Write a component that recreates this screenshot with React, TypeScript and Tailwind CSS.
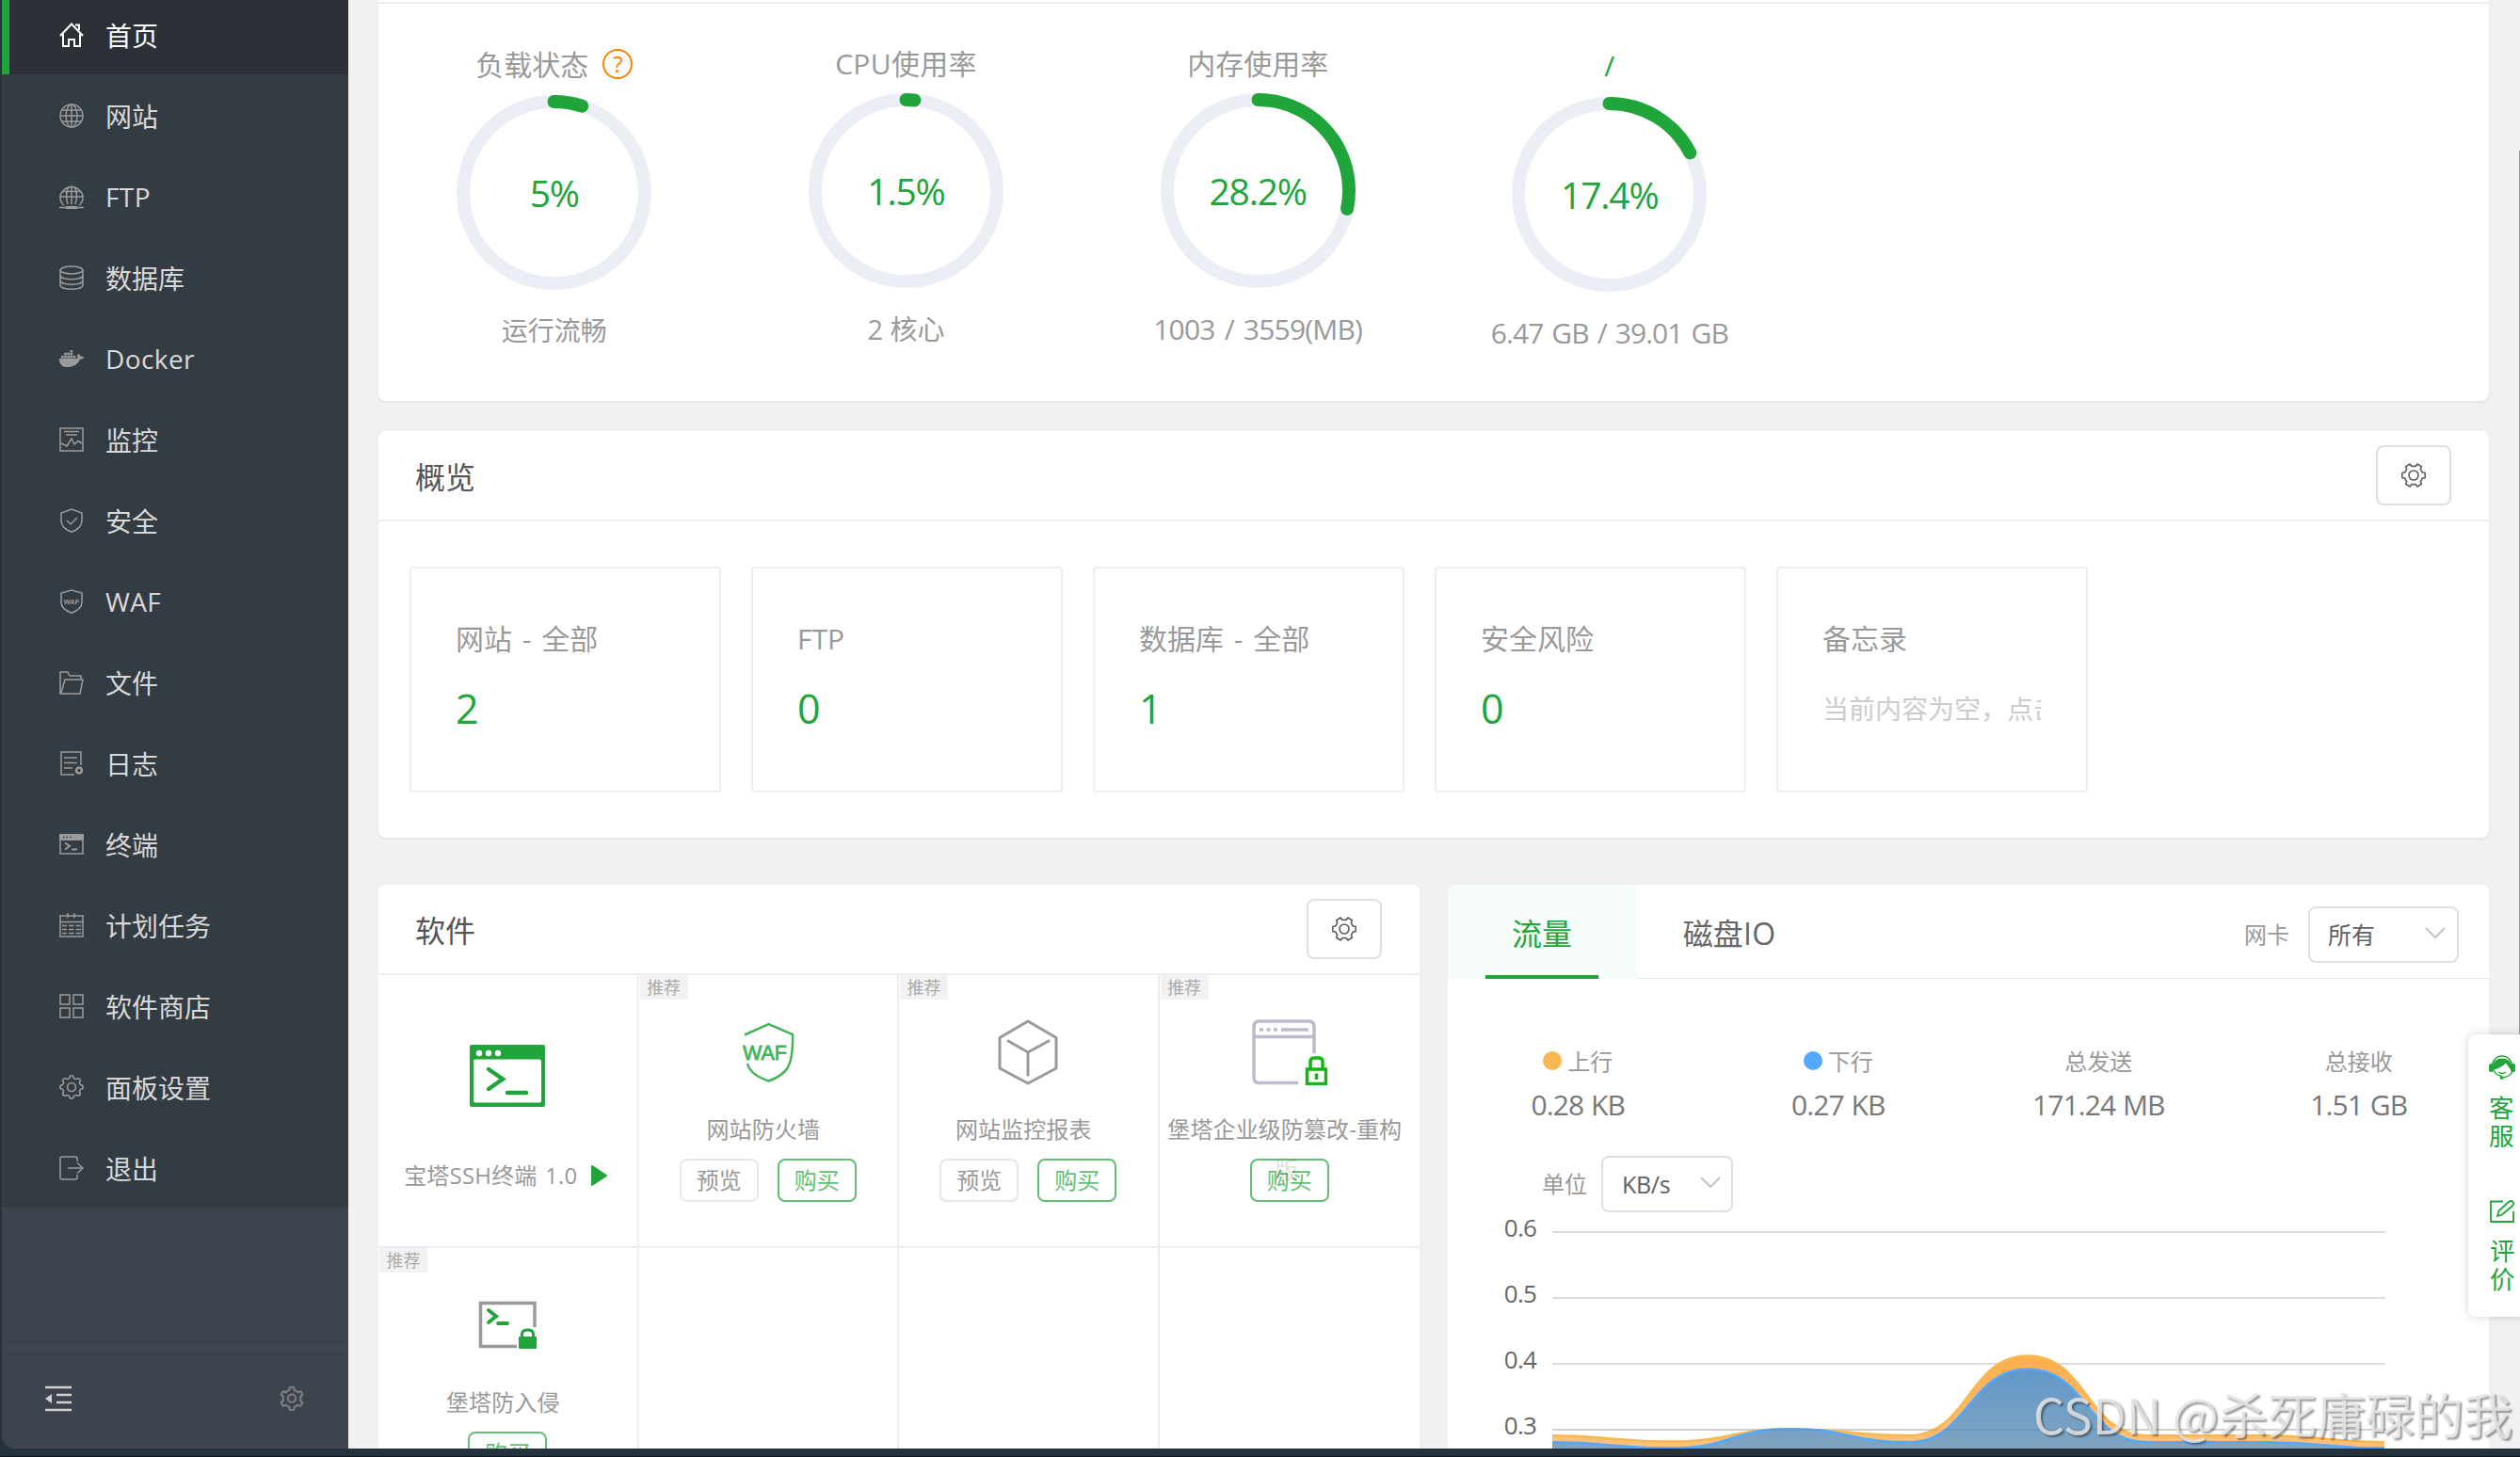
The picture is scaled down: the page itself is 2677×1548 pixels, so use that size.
import type { ReactNode } from "react";
import { AiOutlineSetting } from "react-icons/ai";
import { BsGear } from "react-icons/bs";
import { FaDocker } from "react-icons/fa";

const stroke = { fill: "none", stroke: "currentColor", strokeWidth: 1.5 };

// gear outline with flat teeth, centred on 13,13
const gearPath = (teeth: number, outer: number, inner: number) => {
  const step = (Math.PI * 2) / teeth;
  const points: string[] = [];
  for (let i = 0; i < teeth; i++) {
    const a = i * step;
    [[-0.2, outer], [0.2, outer], [0.3, inner], [0.7, inner]].forEach(([f, r]) => {
      points.push(`${(13 + Math.cos(a + f * step) * r).toFixed(2)} ${(13 + Math.sin(a + f * step) * r).toFixed(2)}`);
    });
  }
  return `M${points.join("L")}Z`;
};

const Icon = ({ children }: { children: ReactNode }) => (
  <svg viewBox="0 0 26 26" className="w-[26px] h-[26px] shrink-0" {...stroke}>
    {children}
  </svg>
);

const menus: { name: string; icon: ReactNode }[] = [
  {
    name: "首页",
    icon: (
      <Icon>
        <path strokeWidth="2" d="M1 14L13 1.5L25 14M4 12V25H10V18H16V25H22V12M17 2.5H21V8" />
      </Icon>
    ),
  },
  {
    name: "网站",
    icon: (
      <Icon>
        <circle cx="13" cy="13" r="12" />
        <ellipse cx="13" cy="13" rx="6" ry="12" />
        <path d="M13 1V25M1 13H25M3 7H23M3 19H23" />
      </Icon>
    ),
  },
  {
    name: "FTP",
    icon: (
      <Icon>
        <path d="M5 22A12 11 0 1 1 21 22M9 21C7 15 7 7 10 2M17 21C19 15 19 7 16 2M13 1V21M1 13H25M3 7.5H23M0 24.5H26" />
        <path strokeWidth="3" d="M7 24.5H19" />
      </Icon>
    ),
  },
  {
    name: "数据库",
    icon: (
      <Icon>
        <ellipse cx="13" cy="5" rx="12" ry="4" />
        <path d="M1 5V21C1 26.500 25 26.500 25 21V5M1 10.500C1 16 25 16 25 10.500M1 16C1 21.500 25 21.500 25 16" />
      </Icon>
    ),
  },
  { name: "Docker", icon: <FaDocker className="w-[26px] h-[26px]" /> },
  {
    name: "监控",
    icon: (
      <Icon>
        <rect x="1" y="1" width="24" height="24" />
        <path d="M5 4.500H21M7 8H19M2 17L8 20L13 12L16 18L20 14.500L24 17" />
      </Icon>
    ),
  },
  {
    name: "安全",
    icon: (
      <Icon>
        <path d="M13 1L24 5V13C24 19 19 23 13 25.200C7 23 2 19 2 13V5ZM8 13L12 17L19 10" />
      </Icon>
    ),
  },
  {
    name: "WAF",
    icon: (
      <Icon>
        <path d="M13 1L24 4V14C24 20 19 23 13 25.200C7 23 2 20 2 14V4Z" />
        <text x="13" y="15.800" textAnchor="middle" fontSize="7.500" fontWeight="700" fontFamily="Liberation Sans, sans-serif" fill="currentColor" stroke="none">
          WAF
        </text>
      </Icon>
    ),
  },
  {
    name: "文件",
    icon: (
      <Icon>
        <path d="M23 9V6H11L9 2H1V25H22L25 10H6L2 24" />
      </Icon>
    ),
  },
  {
    name: "日志",
    icon: (
      <Icon>
        <path d="M16 25H2V1H23V15M5 7H19M5 12.500H19M5 18H14" />
        <circle cx="21" cy="20.500" r="3" strokeWidth="2.500" />
      </Icon>
    ),
  },
  {
    name: "终端",
    icon: (
      <Icon>
        <rect x="1" y="3" width="24" height="20" />
        <path fill="currentColor" stroke="none" d="M0 2H26V9H0Z" />
        <path d="M6 11.500L11 14.800L6 18.500M13 18.500H19" strokeWidth="2" />
        <path d="M4 5.500H5.500M7.500 5.500H9M11 5.500H12.500" stroke="#343c43" />
      </Icon>
    ),
  },
  {
    name: "计划任务",
    icon: (
      <Icon>
        <path d="M1 3H25V25H1ZM1 9.500H25M9 0V5.500M16 0V5.500" />
        <path d="M3 13.500H8M10 13.500H15.500M17.500 13.500H23M3 17.500H8M10 17.500H15.500M17.500 17.500H23M3 21.500H8M10 21.500H15.500M17.500 21.500H23" />
      </Icon>
    ),
  },
  {
    name: "软件商店",
    icon: (
      <Icon>
        <rect x="1" y="1" width="10" height="10" />
        <rect x="15" y="1" width="10" height="10" />
        <rect x="1" y="15" width="10" height="10" />
        <rect x="15" y="15" width="10" height="10" />
      </Icon>
    ),
  },
  { name: "面板设置", icon: <BsGear className="w-[26px] h-[26px]" /> },
  {
    name: "退出",
    icon: (
      <Icon>
        <path d="M19 6V3Q19 1 17 1H3Q1 1 1 3V23Q1 25 3 25H17Q19 25 19 23V20M9 13H25M19 7.500L25 13L19 18.500" />
      </Icon>
    ),
  },
];

const Sidebar = () => (
  <aside className="flex flex-col w-[368px] h-[1539px] shrink-0 overflow-hidden rounded-bl-[14px] bg-[#3d444d]">
    <nav className="flex flex-col -mt-[7px] h-[1290px] bg-[#343c43]">
      {menus.map((item, i) => (
        <div
          key={item.name}
          className={`flex items-center h-[86px] pl-[53px] pt-px gap-[23px] border-l-8 ${
            i === 0 ? "bg-[#2c3138] border-[#20a53a] text-white" : "border-transparent text-[#9b9b9b]"
          }`}
        >
          {item.icon}
          <span
            className={`text-[28px] leading-[40px] ${/^[A-Z]/.test(item.name) ? "tracking-[0.4px]" : "pt-[3px]"} ${
              i === 0 ? "text-white" : "text-[#d8d8d8]"
            }`}
          >
            {item.name}
          </span>
        </div>
      ))}
    </nav>
    <div className="h-[150px] border-b-2 border-[#424b55]" />
    <div className="flex flex-1 items-center justify-between pl-[46px] pr-[45px]">
      <svg viewBox="0 0 28 28" className="w-[28px] h-[28px] text-[#d0d0d0]" fill="none" stroke="currentColor" strokeWidth="2.500">
        <path d="M0 2H28M12 10H28M12 18H28M0 26H28" />
        <path d="M7 9V19L0 14Z" fill="currentColor" stroke="none" />
      </svg>
      <AiOutlineSetting className="w-[30px] h-[30px] text-[#7b7f84]" />
    </div>
  </aside>
);

const gauges = [
  { title: "负载状态", value: 5, text: "运行流畅", help: true, titleClass: "h-[64px] text-[#999]", textClass: "text-[28px]" },
  { title: "CPU使用率", value: 1.5, text: "2 核心", titleClass: "h-[62px] text-[#999] tracking-[0.3px]", textClass: "text-[29px]" },
  { title: "内存使用率", value: 28.2, text: "1003 / 3559(MB)", titleClass: "h-[62px] text-[#999]", textClass: "text-[30px] tracking-[-0.8px] [word-spacing:3px]" },
  { title: "/", value: 17.4, text: "6.47 GB / 39.01 GB", titleClass: "h-[66px] text-[#20a53a]", textClass: "text-[30px] tracking-[-0.9px] [word-spacing:2px]" },
];

const Gauge = ({ value }: { value: number }) => {
  const length = 2 * Math.PI * 96.5;
  return (
    <div className="relative w-[207px] h-[207px]">
      <svg viewBox="0 0 207 207" className="w-[207px] h-[207px] -rotate-90" fill="none" strokeWidth="14">
        <circle cx="103.5" cy="103.5" r="96.5" stroke="#ebeef5" />
        <circle cx="103.5" cy="103.5" r="96.5" stroke="#20a53a" strokeLinecap="round" strokeDasharray={`${(length * value) / 100} ${length}`} />
      </svg>
      <div className="absolute inset-0 flex items-center justify-center text-[39px] tracking-[-1.2px] leading-none text-[#20a53a]">{value}%</div>
    </div>
  );
};

const GearButton = () => (
  <button className="flex items-center justify-center w-[80px] h-[64px] border-2 border-[#dcdfe6] rounded-lg bg-white text-[#606266]">
    <Icon>
      <path d={gearPath(6, 12.5, 9.8)} strokeWidth="1.7" strokeLinejoin="round" />
      <circle cx="13" cy="13" r="5" strokeWidth="1.7" />
    </Icon>
  </button>
);

const CardHeader = ({ title }: { title: string }) => (
  <div className="flex items-center justify-between h-[96px] pl-[39px] pr-10 border-b-2 border-[#eee]">
    <h2 className="text-[32px] text-[#555] leading-[44px] pt-[3px]">{title}</h2>
    <GearButton />
  </div>
);

const overview = [
  { name: "网站 - 全部", value: "2" },
  { name: "FTP", value: "0" },
  { name: "数据库 - 全部", value: "1" },
  { name: "安全风险", value: "0" },
  { name: "备忘录", memo: "当前内容为空，点击编辑" },
];

const SshIcon = () => (
  <svg viewBox="0 0 80 66" className="w-[80px] h-[66px]">
    <rect width="80" height="66" rx="2" fill="#20a53a" />
    <rect x="4" y="15.500" width="72" height="46" rx="2" fill="#fff" />
    <g fill="#fff">
      <circle cx="10" cy="9" r="3.200" />
      <circle cx="20" cy="9" r="3.200" />
      <circle cx="30" cy="9" r="3.200" />
    </g>
    <path d="M20 26L35 36.500L20 47M40 51H60" fill="none" stroke="#20a53a" strokeWidth="4.500" strokeLinecap="round" />
  </svg>
);

const WafIcon = () => (
  <svg viewBox="0 0 56 66" className="w-[56px] h-[66px]">
    <path d="M3 14.500L28.500 3L54 14C54.500 34 52 47 46 53Q39 60 28.500 63.500Q9 57 6 45" fill="none" stroke="#44b35a" strokeWidth="2.500" />
    <text x="24.500" y="40.500" textAnchor="middle" fontSize="21.500" fontFamily="Liberation Sans, sans-serif" fill="#44b35a" stroke="#44b35a" strokeWidth="0.800">
      WAF
    </text>
  </svg>
);

const BoxIcon = () => (
  <svg viewBox="0 0 64 70" className="w-[64px] h-[70px]" fill="none" stroke="#999" strokeWidth="3" strokeLinecap="round" strokeLinejoin="round">
    <path d="M32 2L62 19.500V52L32 68L2 52V19.500Z" />
    <path d="M11 23L32 35L54 23M32 35V59" />
  </svg>
);

const TamperIcon = () => (
  <svg viewBox="0 0 80 70" className="w-[80px] h-[70px]" fill="none" stroke="#bcbacd" strokeWidth="3.500">
    <path d="M49 67.500H7Q2 67.500 2 62V8Q2 2 8 2H60Q66 2 66 8V36M2 18.500H66" />
    <path d="M8 11H12M15.500 11H19.500M23 11H27" />
    <path d="M31 11H60" />
    <g stroke="#12b812">
      <rect x="58.500" y="53" width="20" height="15.500" />
      <path d="M62 52V45Q62 41 66 41H71Q75 41 75 45V52M68.500 57.500V64" />
    </g>
  </svg>
);

const IntrusionIcon = () => (
  <svg viewBox="0 0 62 52" className="w-[62px] h-[52px]" fill="none">
    <path d="M41 48.500H2.500V2.500H60V28" stroke="#999" strokeWidth="3.500" />
    <path d="M11 10L19 16.500L11 23M21 24H31" stroke="#20a53a" strokeWidth="3.800" strokeLinecap="round" />
    <rect x="43" y="38" width="19" height="13" rx="1" fill="#20a53a" />
    <path d="M46.500 39V35Q47 31 52.500 31Q58 31 58.500 35V39" stroke="#20a53a" strokeWidth="3" />
  </svg>
);

const software = [
  { name: "宝塔SSH终端 1.0", icon: <SshIcon />, running: true },
  { name: "网站防火墙", icon: <WafIcon />, preview: true },
  { name: "网站监控报表", icon: <BoxIcon />, preview: true },
  { name: "堡塔企业级防篡改-重构", icon: <TamperIcon />, rest: "版" },
  { name: "堡塔防入侵", icon: <IntrusionIcon /> },
  null,
  null,
  null,
];

const SoftwareCard = () => (
  <section className="w-[1106px] h-[700px] shrink-0 rounded-lg bg-white">
    <CardHeader title="软件" />
    <div className="grid grid-cols-4">
      {software.map((item, i) => (
        <div key={i} className={`relative h-[290px] border-b-2 border-[#ececf8] ${i % 4 < 3 ? "border-r-2" : ""}`}>
          {item?.running && (
            <div className="flex flex-col items-center pt-[74px]">
              {item.icon}
              <div className="flex items-center gap-[15px] mt-[55px] -ml-[4px]">
                <span className="text-[24px] leading-[36px] tracking-[0.2px] [word-spacing:2px] text-[#999]">{item.name}</span>
                <svg viewBox="0 0 17 22" className="w-[17px] h-[22px]">
                  <path d="M1 1V21L16 11Z" fill="#20a53a" stroke="#20a53a" strokeWidth="2" strokeLinejoin="round" />
                </svg>
              </div>
            </div>
          )}
          {item && !item.running && (
            <>
              <span className="absolute left-px top-0 w-[51px] h-[26px] bg-[#f2f2f2] text-[#aaa] text-[18px] leading-[26px] text-center">推荐</span>
              <div className="flex flex-col items-center">
                <div className="flex items-center justify-center h-[146px] pt-[18px]">{item.icon}</div>
                <div className="relative h-[49px] text-[24px] leading-[35px] tracking-[0.1px] text-[#999] whitespace-nowrap -ml-[10px]">
                  {item.name}
                  {item.rest && <span className="absolute left-[114px] top-[43px]">{item.rest}</span>}
                </div>
                <div className="relative flex gap-[20px]">
                  {item.preview && (
                    <button className="w-[84px] h-[46px] rounded-lg border-2 border-[#dcdfe6] bg-white text-[24px] leading-[42px] text-[#777] opacity-75">预览</button>
                  )}
                  <button className="w-[84px] h-[46px] rounded-lg border-2 border-[#20a53a] bg-white text-[24px] leading-[42px] text-[#20a53a] opacity-70">购买</button>
                </div>
              </div>
            </>
          )}
        </div>
      ))}
    </div>
  </section>
);

const Chevron = () => (
  <svg viewBox="0 0 22 12" className="w-[22px] h-[12px] -mt-[5px]" fill="none" stroke="#c0c4cc" strokeWidth="2">
    <path d="M1 1L11 11L21 1" />
  </svg>
);

const stats = [
  { name: "上行", value: "0.28 KB", dot: "bg-[#f7b851]" },
  { name: "下行", value: "0.27 KB", dot: "bg-[#52a9ff]" },
  { name: "总发送", value: "171.24 MB" },
  { name: "总接收", value: "1.51 GB" },
];

const up = [0.291, 0.282, 0.301, 0.291, 0.412, 0.291, 0.291, 0.281];
const down = [0.281, 0.272, 0.301, 0.281, 0.392, 0.281, 0.281, 0.272];

const toY = (v: number) => 1 + (0.6 - v) * 700;

const curve = (data: number[]) => {
  const step = 884 / (data.length - 1);
  return data.reduce((d, v, i) => {
    if (i === 0) return `M0 ${toY(v)}`;
    const mid = (i - 0.5) * step;
    return `${d}C${mid} ${toY(data[i - 1])} ${mid} ${toY(v)} ${i * step} ${toY(v)}`;
  }, "");
};

const Chart = () => (
  <div className="flex">
    <div className="w-[111px] pr-[17px] -mt-[5px] text-right text-[26px] tracking-[-0.8px] leading-[70px] text-[#666]">
      {["0.6", "0.5", "0.4", "0.3"].map((label) => (
        <div key={label} className="h-[70px] -translate-y-[14px]">{label}</div>
      ))}
    </div>
    <svg viewBox="0 0 885 300" className="w-[885px] h-[300px] mt-[20px]" fill="none">
      <defs>
        <linearGradient id="up" gradientUnits="userSpaceOnUse" x1="0" y1="130" x2="0" y2="240">
          <stop offset="0" stopColor="#ffa940" />
          <stop offset="1" stopColor="#ffc07a" />
        </linearGradient>
        <linearGradient id="down" gradientUnits="userSpaceOnUse" x1="0" y1="145" x2="0" y2="240">
          <stop offset="0" stopColor="#6198c9" />
          <stop offset="1" stopColor="#82a5c0" />
        </linearGradient>
      </defs>
      {[0, 1, 2, 3].map((n) => (
        <path key={n} d={`M0 ${1 + n * 70}H885`} stroke="#dcdcdc" strokeWidth="2" />
      ))}
      <path d={`${curve(up)}V300H0Z`} fill="url(#up)" fillOpacity="0.95" />
      <path d={curve(up)} stroke="#f7b851" strokeWidth="2.5" />
      <path d={`${curve(down)}V300H0Z`} fill="url(#down)" />
      <path d={curve(down)} stroke="#52a9ff" strokeWidth="2.5" />
      <path d="M0 211H885" stroke="#000" strokeOpacity="0.06" strokeWidth="2" />
    </svg>
  </div>
);

const TrafficCard = () => (
  <section className="w-[1106px] h-[700px] shrink-0 rounded-lg bg-white">
    <div className="flex h-[100px] border-b border-[#e8ebee]">
      <div className="flex flex-col items-center w-[200px] h-[100px] rounded-tl-lg bg-[#f6fcf8] text-[32px] text-[#20a53a]">
        <span className="h-[96px] leading-[104px]">流量</span>
        <span className="w-[120px] h-[4px] bg-[#20a53a]" />
      </div>
      <div className="w-[200px] pr-[2px] text-center text-[32px] leading-[103px] tracking-[0.2px] text-[#666]">磁盘IO</div>
      <div className="flex items-center ml-auto pr-[32px] pt-[7px]">
        <span className="text-[24px] text-[#999] mr-[20px]">网卡</span>
        <div className="flex items-center justify-between w-[160px] h-[60px] pl-[19px] pr-[12px] border-2 border-[#dcdfe6] rounded-lg">
          <span className="text-[25px] leading-none text-[#606266]">所有</span>
          <Chevron />
        </div>
      </div>
    </div>
    <div className="grid grid-cols-4 pt-[68px] text-center">
      {stats.map((item) => (
        <div key={item.name}>
          <div className="flex items-center justify-center gap-[6px] h-[40px] text-[24px] text-[#999]">
            {item.dot && <span className={`w-[20px] h-[20px] rounded-full -mt-[3px] ${item.dot}`} />}
            {item.name}
          </div>
          <div className="h-[52px] text-[30px] leading-[52px] tracking-[-0.9px] [word-spacing:1px] text-[#777]">{item.value}</div>
        </div>
      ))}
    </div>
    <div className="flex items-center h-[60px] mt-[28px] pl-[100px]">
      <span className="text-[24px] text-[#999] mr-[15px]">单位</span>
      <div className="flex items-center justify-between w-[140px] h-[60px] pl-[20px] pr-[11px] border-2 border-[#dcdfe6] rounded-lg">
        <span className="text-[25px] leading-none tracking-[-0.3px] text-[#606266]">KB/s</span>
        <Chevron />
      </div>
    </div>
    <Chart />
  </section>
);

const ServiceBar = () => (
  <div className="absolute left-[2622px] top-[1099px] w-[60px] h-[300px] rounded-l-lg bg-white shadow-[0_0_10px_rgba(0,0,0,0.18)] pl-[22px] text-[#20a53a]">
    <svg viewBox="0 0 28 26" className="w-[28px] h-[26px] mt-[22px]" fill="none" stroke="currentColor">
      <path d="M3.500 10Q6 1 14 1Q22 1 24.500 10" strokeWidth="1.500" />
      <path d="M4.500 16Q2.500 4 14 3.500Q25.500 4 23.500 16Q20.500 12 18 8.500Q13 13.500 4.500 16Z" fill="currentColor" stroke="none" />
      <rect x="0" y="9" width="5" height="9" rx="2" fill="currentColor" stroke="none" />
      <rect x="23" y="9" width="5" height="9" rx="2" fill="currentColor" stroke="none" />
      <path d="M5 16Q8 22 13 22M25 17Q23 23 14 24M10 18Q14 21 18 18" strokeWidth="1.300" />
      <circle cx="13.500" cy="24" r="1.900" fill="currentColor" stroke="none" />
    </svg>
    <div className="w-[27px] mt-[15px] text-[26.5px] leading-[30px]">客服</div>
    <svg viewBox="0 0 26 24" className="w-[26px] h-[24px] mt-[53px] ml-px" fill="none" stroke="currentColor" strokeWidth="1.800">
      <path d="M14 1.500H1V23H25V12" />
      <path d="M8 17L9.500 11.500L20 2Q23 0 24.500 2Q26 4.500 23.500 6.500L13 15.500Z" />
    </svg>
    <div className="w-[27px] mt-[15px] ml-px text-[26.5px] leading-[30px]">评价</div>
  </div>
);

const App = () => {
  return (
    <div className="relative w-[2677px] h-[1548px] overflow-hidden bg-[#27323f] border-b border-[#0c1117] pl-[2px] font-['Open_Sans','Noto_Sans_CJK_SC',sans-serif]">
      <div className="flex h-[1539px] overflow-hidden">
        <Sidebar />
        <main className="w-[2307px] h-[1539px] pl-[32px] bg-[#f1f1f1] overflow-hidden">
          <section className="w-[2242px] h-[426px] rounded-b-lg bg-white shadow-[0_2px_3px_rgba(0,0,0,0.05)]">
            <div className="h-[4px] border-b-2 border-[#eee]" />
            <div className="grid grid-cols-6 pt-[33px]">
              {gauges.map((item) => (
                <div key={item.title} className="flex flex-col items-center">
                  <div className={`flex items-center gap-[15px] text-[30px] leading-none ${item.titleClass}`}>
                    {item.title}
                    {item.help && (
                      <span className="w-[32px] h-[32px] -mt-[2px] rounded-full border-2 border-[#ff8100] text-[#ff8100] text-[24px] leading-[28px] text-center">?</span>
                    )}
                  </div>
                  <Gauge value={item.value} />
                  <div className={`h-[44px] mt-[22px] leading-[43px] text-[#999] ${item.textClass}`}>{item.text}</div>
                </div>
              ))}
            </div>
          </section>

          <section className="w-[2242px] h-[432px] mt-[32px] rounded-lg bg-white shadow-[0_2px_3px_rgba(0,0,0,0.05)]">
            <CardHeader title="概览" />
            <div className="flex gap-[32px] pt-[48px] pl-[33px]">
              {overview.map((item) => (
                <div key={item.name} className="w-[331px] h-[240px] pl-[47px] pr-[48px] pt-[53px] border-2 border-[#eee] rounded">
                  <div className="h-[44px] text-[30px] leading-[44px] text-[#999] whitespace-nowrap [word-spacing:3px]">{item.name}</div>
                  {item.memo ? (
                    <div className="mt-[32px] h-[40px] text-[28px] leading-[40px] text-[#ccc] whitespace-nowrap overflow-hidden">{item.memo}</div>
                  ) : (
                    <div className="mt-[22px] h-[60px] text-[43px] leading-[59px] text-[#20a53a]">{item.value}</div>
                  )}
                </div>
              ))}
            </div>
          </section>

          <div className="flex gap-[30px] mt-[50px]">
            <SoftwareCard />
            <TrafficCard />
          </div>
        </main>
      </div>
      <div className="absolute left-[2676px] top-[160px] w-px h-[940px] bg-[#999]" />
      <ServiceBar />
      <div className="absolute left-[2160px] top-[1467px] text-[52px] leading-[70px] whitespace-nowrap text-[#e6e6e6]/85 [text-shadow:2px_2px_2px_rgba(0,0,0,0.4)] font-['Noto_Sans_CJK_SC',sans-serif]">
        CSDN @杀死庸碌的我
      </div>
    </div>
  );
};

export default App;
